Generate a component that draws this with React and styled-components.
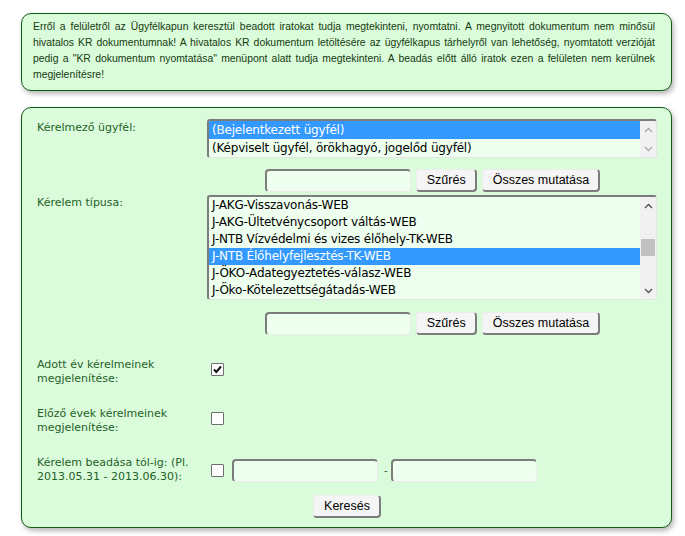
import React from 'react'
import styled, { createGlobalStyle } from 'styled-components'

const GlobalStyle = createGlobalStyle`
  body {
    margin: 0;
    background: #ffffff;
  }
`

const applicants = [
  { name: '(Bejelentkezett ügyfél)', selected: true },
  { name: '(Képviselt ügyfél, örökhagyó, jogelőd ügyfél)' },
]

const requestTypes = [
  { name: 'J-AKG-Visszavonás-WEB' },
  { name: 'J-AKG-Ültetvénycsoport váltás-WEB' },
  { name: 'J-NTB Vízvédelmi és vizes élőhely-TK-WEB' },
  { name: 'J-NTB Élőhelyfejlesztés-TK-WEB', selected: true },
  { name: 'J-ÖKO-Adategyeztetés-válasz-WEB' },
  { name: 'J-Öko-Kötelezettségátadás-WEB' },
]

const Chevron = ({ up, color }) => (
  <svg width="9" height="6" viewBox="0 0 9 6">
    <polyline
      points={up ? '1,5 4.5,1.5 8,5' : '1,1 4.5,4.5 8,1'}
      fill="none"
      stroke={color}
      strokeWidth="1.3"
    />
  </svg>
)

const ListBox = ({ items, rowHeight, height, active, thumbTop }) => {
  const arrowColor = active ? '#505050' : '#a8a8a8'
  return (
    <List $h={height}>
      <Items>
        {items.map((item) => (
          <Item key={item.name} $h={rowHeight} $selected={item.selected}>
            {item.name}
          </Item>
        ))}
      </Items>
      <Scrollbar>
        <Arrow>
          <Chevron up color={arrowColor} />
        </Arrow>
        <Track>{active && <Thumb $top={thumbTop} />}</Track>
        <Arrow>
          <Chevron color={arrowColor} />
        </Arrow>
      </Scrollbar>
    </List>
  )
}

const FilterBar = () => (
  <FilterRow>
    <TextInput $w={146} />
    <Button>Szűrés</Button>
    <Button>Összes mutatása</Button>
  </FilterRow>
)

const CheckBox = ({ checked }) => (
  <Box>
    {checked && (
      <svg width="11" height="11" viewBox="0 0 11 11">
        <polyline
          points="2,5.5 4.3,8 9,2.5"
          fill="none"
          stroke="#111"
          strokeWidth="2"
        />
      </svg>
    )}
  </Box>
)

const App = () => {
  return (
    <>
      <GlobalStyle />
      <Page>
        <Notice>
          Erről a felületről az Ügyfélkapun keresztül beadott iratokat tudja
          megtekinteni, nyomtatni. A megnyitott dokumentum nem minősül
          hivatalos KR dokumentumnak! A hivatalos KR dokumentum letöltésére az
          ügyfélkapus tárhelyről van lehetőség, nyomtatott verzióját pedig a
          "KR dokumentum nyomtatása" menüpont alatt tudja megtekinteni. A
          beadás előtt álló iratok ezen a felületen nem kerülnek
          megjelenítésre!
        </Notice>

        <Panel>
          <FieldRow>
            <Label $top={2}>Kérelmező ügyfél:</Label>
            <ListBox items={applicants} rowHeight={18} height={39} />
          </FieldRow>
          <FieldRow $gap={11}>
            <span />
            <FilterBar />
          </FieldRow>

          <FieldRow $gap={3}>
            <Label>Kérelem típusa:</Label>
            <ListBox
              items={requestTypes}
              rowHeight={17}
              height={105}
              active
              thumbTop={25}
            />
          </FieldRow>
          <FieldRow $gap={12}>
            <span />
            <FilterBar />
          </FieldRow>

          <FieldRow $gap={22}>
            <Label>
              Adott év kérelmeinek
              <br />
              megjelenítése:
            </Label>
            <Controls>
              <CheckBox checked />
            </Controls>
          </FieldRow>

          <FieldRow $gap={20}>
            <Label>
              Előző évek kérelmeinek
              <br />
              megjelenítése:
            </Label>
            <Controls>
              <CheckBox />
            </Controls>
          </FieldRow>

          <FieldRow $gap={20}>
            <Label>
              Kérelem beadása tól-ig: (Pl.
              <br />
              2013.05.31 - 2013.06.30):
            </Label>
            <DateControls>
              <CheckBox />
              <TextInput $w={146} />
              <Dash>-</Dash>
              <TextInput $w={146} />
            </DateControls>
          </FieldRow>

          <Actions>
            <Button>Keresés</Button>
          </Actions>
        </Panel>
      </Page>
    </>
  )
}

export default App

const Page = styled.div`
  padding: 13px 13px 10px 21px;
  width: 651px;
`

const Notice = styled.div`
  background: #dbfcdb;
  border: 1px solid #0f5a14;
  border-radius: 10px;
  box-shadow: 2px 3px 5px rgba(0, 0, 0, 0.28);
  padding: 5px 16px 7px 11px;
  font-family: 'Liberation Sans', Arial, sans-serif;
  font-size: 10.4px;
  line-height: 16px;
  color: #143a10;
  text-align: justify;
`

const Panel = styled.div`
  margin-top: 16px;
  background: #dbfcdb;
  border: 1px solid #0f5a14;
  border-radius: 10px;
  box-shadow: 2px 3px 5px rgba(0, 0, 0, 0.28);
  padding: 11px 14px 9px 15px;
`

const FieldRow = styled.div`
  display: grid;
  grid-template-columns: 170px 450px;
  margin-top: ${({ $gap }) => $gap || 0}px;
`

const Label = styled.div`
  font-family: 'DejaVu Sans', Verdana, sans-serif;
  font-size: 11px;
  line-height: 14px;
  color: #1f6128;
  padding-top: ${({ $top }) => ($top === undefined ? 1 : $top)}px;
`

const List = styled.div`
  height: ${({ $h }) => $h}px;
  box-sizing: border-box;
  display: flex;
  border-style: solid;
  border-width: 2px 1px 1px 2px;
  border-color: #7c7c7c #e4e4e4 #e4e4e4 #7c7c7c;
  border-radius: 3px;
  background: #efffef;
  overflow: hidden;
`

const Items = styled.div`
  flex: 1;
  min-width: 0;
`

const Item = styled.div`
  height: ${({ $h }) => $h}px;
  line-height: ${({ $h }) => $h}px;
  padding-left: 3px;
  font-family: 'DejaVu Sans', Verdana, sans-serif;
  font-size: 12px;
  letter-spacing: -0.2px;
  white-space: nowrap;
  color: ${({ $selected }) => ($selected ? '#ffffff' : '#000000')};
  background: ${({ $selected }) => ($selected ? '#3399ff' : 'transparent')};
`

const Scrollbar = styled.div`
  width: 16px;
  flex-shrink: 0;
  display: flex;
  flex-direction: column;
  background: #f1f1f1;
`

const Arrow = styled.div`
  height: 17px;
  display: flex;
  align-items: center;
  justify-content: center;
`

const Track = styled.div`
  flex: 1;
`

const Thumb = styled.div`
  margin: ${({ $top }) => $top}px 1px 0;
  height: 17px;
  background: #c1c1c1;
`

const FilterRow = styled.div`
  display: flex;
  justify-content: center;
  gap: 5px;
  padding-left: 1px;
`

const TextInput = styled.div`
  width: ${({ $w }) => $w}px;
  height: 23px;
  box-sizing: border-box;
  border-style: solid;
  border-width: 2px 1px 1px 2px;
  border-color: #7c7c7c #ececec #ececec #7c7c7c;
  border-radius: 4px;
  background: #efffef;
`

const Button = styled.button`
  height: 23px;
  box-sizing: border-box;
  padding: 0 9px 0 10px;
  border-style: solid;
  border-width: 1px 2px 2px 1px;
  border-color: #ececec #7c7c7c #7c7c7c #ececec;
  border-radius: 4px;
  background: #f5f5f5;
  font-family: 'Liberation Sans', Tahoma, Arial, sans-serif;
  font-size: 12.5px;
  color: #000;
`

const Controls = styled.div`
  display: flex;
  padding: 6px 0 0 4px;
`

const DateControls = styled.div`
  display: flex;
  align-items: center;
  padding: 1px 0 0 4px;
  gap: 8px;
`

const Box = styled.div`
  width: 13px;
  height: 13px;
  box-sizing: border-box;
  border: 1px solid #6e6e6e;
  border-radius: 1px;
  background: #ffffff;
  display: flex;
  align-items: center;
  justify-content: center;
`

const Dash = styled.span`
  font-family: 'Liberation Sans', Arial, sans-serif;
  font-size: 11px;
  color: #1f6128;
  margin: 0 -5px 0 -2px;
`

const Actions = styled.div`
  display: flex;
  justify-content: center;
  margin-top: 11px;
`
